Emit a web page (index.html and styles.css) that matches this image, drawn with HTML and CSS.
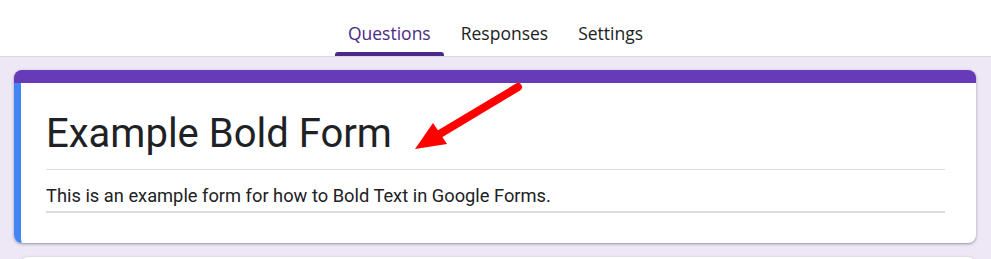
FILE: index.html
```html
<!DOCTYPE html>
<html lang="en">
<head>
    <meta charset="UTF-8">
    <title>Example Bold Form - Google Forms</title>
    <link rel="stylesheet" href="styles.css">
</head>
<body>
    <header class="topbar">
        <nav class="tabs">
            <a class="tab active" href="#">Questions</a>
            <a class="tab" href="#">Responses</a>
            <a class="tab" href="#">Settings</a>
        </nav>
    </header>

    <main class="canvas">
        <section class="card title-card">
            <div class="card-body">
                <div class="field title-field">Example Bold Form</div>
                <div class="field desc-field">This is an example form for how to Bold Text in Google Forms.</div>
            </div>
            <svg class="arrow" width="140" height="90" viewBox="0 0 140 90">
                <line x1="130" y1="17" x2="50" y2="65" stroke="#ff0000" stroke-width="8" stroke-linecap="round"/>
                <polygon points="27,79 45,53 59,74" fill="#ff0000"/>
            </svg>
        </section>
        <section class="card next-card"></section>
    </main>
</body>
</html>
```

FILE: styles.css
```css
body {
    margin: 0;
    font-family: Roboto, Arial, sans-serif;
    color: #202124;
    background: #ede7f6;
}
.topbar {
    background: #fff;
    border-bottom: 1px solid #dadce0;
    height: 56px;
}
.tabs {
    display: flex;
    justify-content: center;
    height: 100%;
}
.tab {
    position: relative;
    display: flex;
    align-items: center;
    padding: 10px 13px 0;
    margin: 0 2px;
    font-family: "Open Sans", Roboto, sans-serif;
    font-size: 17.5px;
    font-weight: 500;
    color: #202124;
    text-decoration: none;
}
.tab.active {
    color: #4a2a86;
}
.tab.active::after {
    content: "";
    position: absolute;
    left: 0;
    right: 0;
    bottom: 0;
    height: 4px;
    background: #4a2a86;
    border-radius: 3px 3px 0 0;
}
.canvas {
    padding: 13px 15px 0 14px;
}
.card {
    background: #fff;
    border-radius: 8px;
    box-shadow: 0 1px 2px rgba(60, 64, 67, 0.35), 0 1px 3px 1px rgba(60, 64, 67, 0.12);
}
.title-card {
    position: relative;
    border-top: 13px solid #673ab7;
    height: 160px;
}
.card-body {
    border-left: 7px solid #4285f4;
    border-bottom-left-radius: 8px;
    height: 100%;
    padding: 0 31px 0 25px;
}
.title-field {
    font-size: 40px;
    line-height: 50px;
    padding-top: 26px;
    padding-bottom: 10px;
    border-bottom: 1px solid #dadce0;
}
.desc-field {
    font-size: 18.3px;
    line-height: 22px;
    padding-top: 15px;
    padding-bottom: 4px;
    border-bottom: 2px solid #dadce0;
}
.arrow {
    position: absolute;
    left: 374px;
    top: -13px;
}
.next-card {
    margin-top: 14px;
    height: 20px;
    margin-left: 6px;
}
```
